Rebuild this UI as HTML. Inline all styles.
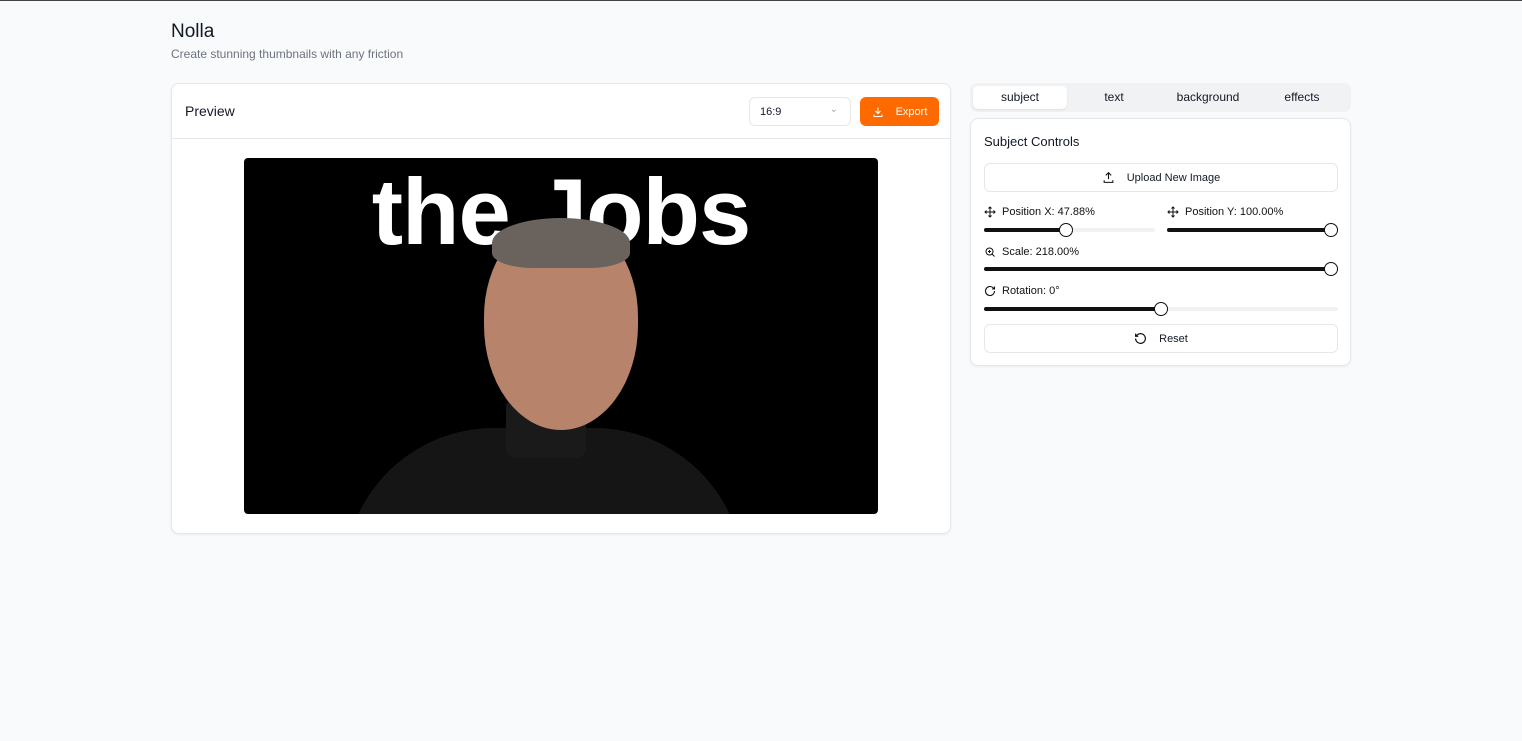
<!DOCTYPE html>
<html><head><style>
*{box-sizing:border-box;margin:0;padding:0}
body{width:1522px;height:741px;background:#f9fafb;font-family:"Liberation Sans",sans-serif;color:#111827;position:relative;overflow:hidden}
.abs{position:absolute}
.card{position:absolute;background:#fff;border:1px solid #e5e7eb;border-radius:8px;box-shadow:0 1px 2px rgba(0,0,0,.06)}
.lbl{position:absolute;font-size:11px;color:#111;display:flex;align-items:center;gap:6px}
.track{position:absolute;height:4px;background:#f1f1f1;border-radius:2px}
.fill{position:absolute;left:0;top:0;height:4px;background:#111;border-radius:2px}
.thumb{position:absolute;top:-5px;width:14px;height:14px;border-radius:50%;background:#fff;border:1.5px solid #111}
.btn{position:absolute;border:1px solid #e5e7eb;border-radius:6px;background:#fff;font-size:11px;display:flex;align-items:center;justify-content:center;gap:12px}
</style></head><body>
<div class="abs" style="left:0;top:0;width:1522px;height:1px;background:#444"></div>
<div class="abs" style="left:171px;top:21px;font-size:19px">Nolla</div>
<div class="abs" style="left:171px;top:47px;font-size:12px;color:#6b7280">Create stunning thumbnails with any friction</div>

<div class="card" style="left:171px;top:83px;width:780px;height:451px">
 <div class="abs" style="left:13px;top:19px;font-size:14px">Preview</div>
 <div class="abs" style="left:577px;top:13px;width:102px;height:29px;border:1px solid #e5e7eb;border-radius:6px;font-size:11px;padding:8px 10px">16:9<span style="position:absolute;right:12px;top:6px;color:#aaa;font-size:10px">⌄</span></div>
 <div class="abs" style="left:688px;top:13px;width:79px;height:29px;background:#ff6a00;border-radius:6px;color:#fff;font-size:11px;display:flex;align-items:center;justify-content:center;gap:12px">
  <svg width="12" height="12" viewBox="0 0 24 24" fill="none" stroke="#fff" stroke-width="2"><path d="M12 3v12M7 10l5 5 5-5M4 17v4h16v-4"/></svg>Export</div>
 <div class="abs" style="left:0;top:54px;width:778px;height:1px;background:#e5e7eb"></div>
 <div class="abs" style="left:72px;top:74px;width:634px;height:356px;background:#000;border-radius:4px;overflow:hidden">
  <div class="abs" style="left:0;width:634px;top:0px;text-align:center;color:#fff;font-weight:bold;font-size:94px;letter-spacing:-1px">the Jobs</div>
  <div class="abs" style="left:100px;top:270px;width:400px;height:150px;background:#151515;border-radius:180px 180px 0 0"></div>
  <div class="abs" style="left:262px;top:240px;width:80px;height:60px;background:#1a1a1a;border-radius:10px"></div>
  <div class="abs" style="left:240px;top:62px;width:154px;height:210px;background:#b7836a;border-radius:46% 46% 50% 50%"></div>
  <div class="abs" style="left:248px;top:60px;width:138px;height:50px;background:#6a625c;border-radius:50% 50% 30% 30%"></div>
 </div>
</div>

<div class="abs" style="left:970px;top:83px;width:381px;height:29px;background:#f1f2f4;border-radius:7px"></div>
<div class="abs" style="left:973px;top:86px;width:94px;height:23px;background:#fff;border-radius:5px;box-shadow:0 1px 2px rgba(0,0,0,.08)"></div>
<div class="abs" style="left:973px;top:90px;width:94px;text-align:center;font-size:12px">subject</div>
<div class="abs" style="left:1067px;top:90px;width:94px;text-align:center;font-size:12px">text</div>
<div class="abs" style="left:1161px;top:90px;width:94px;text-align:center;font-size:12px">background</div>
<div class="abs" style="left:1255px;top:90px;width:94px;text-align:center;font-size:12px">effects</div>

<div class="card" style="left:970px;top:118px;width:381px;height:248px">
 <div class="abs" style="left:13px;top:15px;font-size:13px">Subject Controls</div>
 <div class="btn" style="left:13px;top:44px;width:354px;height:29px"><svg width="13" height="13" viewBox="0 0 24 24" fill="none" stroke="#111" stroke-width="2"><path d="M12 15V3M7 8l5-5 5 5M4 17v4h16v-4"/></svg>Upload New Image</div>
 <div class="lbl" style="left:13px;top:87px"><svg width="12" height="12" viewBox="0 0 24 24" fill="none" stroke="#111" stroke-width="2"><path d="M12 2v20M2 12h20M9 5l3-3 3 3M9 19l3 3 3-3M5 9l-3 3 3 3M19 9l3 3-3 3"/></svg>Position X: 47.88%</div>
 <div class="track" style="left:13px;top:109px;width:171px"><div class="fill" style="width:82px"></div><div class="thumb" style="left:75px"></div></div>
 <div class="lbl" style="left:196px;top:87px"><svg width="12" height="12" viewBox="0 0 24 24" fill="none" stroke="#111" stroke-width="2"><path d="M12 2v20M2 12h20M9 5l3-3 3 3M9 19l3 3 3-3M5 9l-3 3 3 3M19 9l3 3-3 3"/></svg>Position Y: 100.00%</div>
 <div class="track" style="left:196px;top:109px;width:171px"><div class="fill" style="width:171px"></div><div class="thumb" style="left:157px"></div></div>
 <div class="lbl" style="left:13px;top:127px"><svg width="12" height="12" viewBox="0 0 24 24" fill="none" stroke="#111" stroke-width="2"><circle cx="11" cy="11" r="7"/><path d="M21 21l-5-5M11 8v6M8 11h6"/></svg>Scale: 218.00%</div>
 <div class="track" style="left:13px;top:148px;width:354px"><div class="fill" style="width:354px"></div><div class="thumb" style="left:340px"></div></div>
 <div class="lbl" style="left:13px;top:166px"><svg width="12" height="12" viewBox="0 0 24 24" fill="none" stroke="#111" stroke-width="2.2"><path d="M21 12a9 9 0 1 1-3-6.7L21 8M21 3v5h-5"/></svg>Rotation: 0°</div>
 <div class="track" style="left:13px;top:188px;width:354px"><div class="fill" style="width:177px"></div><div class="thumb" style="left:170px"></div></div>
 <div class="btn" style="left:13px;top:205px;width:354px;height:29px"><svg width="13" height="13" viewBox="0 0 24 24" fill="none" stroke="#111" stroke-width="2.2"><path d="M3 12a9 9 0 1 0 3-6.7L3 8M3 3v5h5"/></svg>Reset</div>
</div>
</body></html>
